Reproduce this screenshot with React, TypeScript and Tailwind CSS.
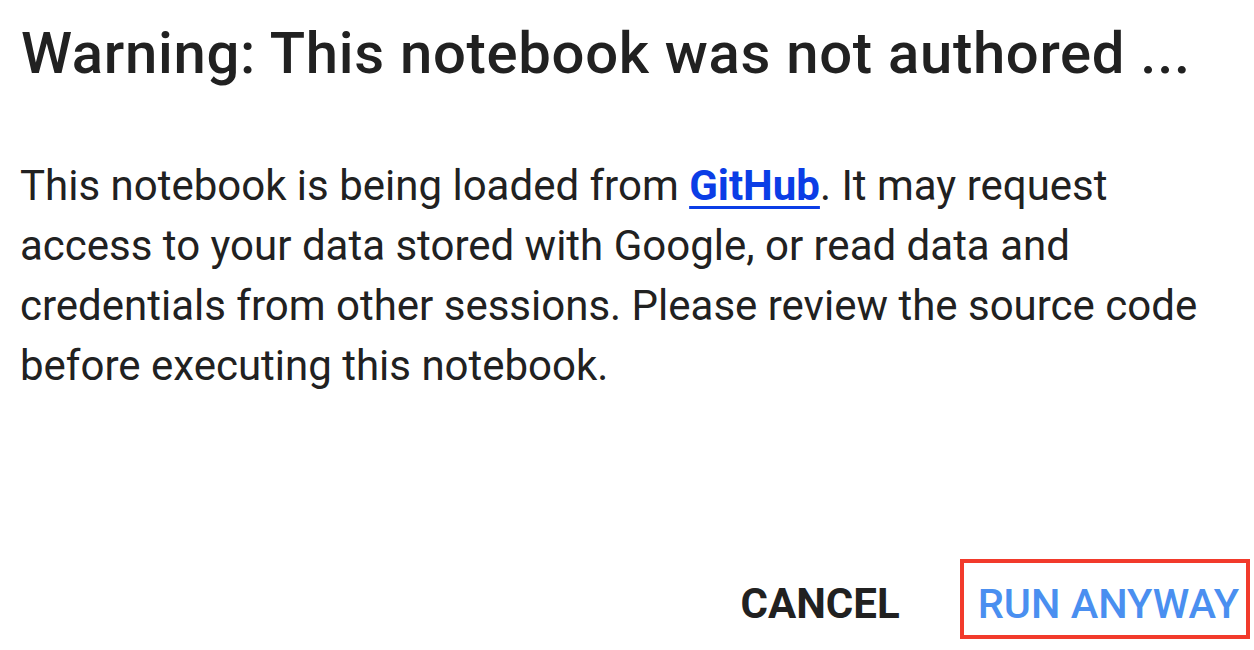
import React from "react";

export default function App() {
  return (
    <div
      className="w-[1254px] h-[650px] bg-white text-[#212121] overflow-hidden flex flex-col"
      style={{ fontFamily: "Roboto, 'Liberation Sans', sans-serif" }}
    >
      <h1 className="mt-[24px] pl-[21px] text-[58px] leading-[58px] font-medium tracking-[0.7px] whitespace-nowrap">
        Warning: This notebook was not authored ...
      </h1>
      <p className="mt-[74px] pl-[20px] pr-[40px] text-[42px] leading-[60px] font-normal">
        This notebook is being loaded from{" "}
        <a className="text-[#0b3de6] font-bold underline decoration-[3px] underline-offset-[6px]" href="#">
          GitHub
        </a>
        . It may request access to your data stored with Google, or read data and credentials from other sessions. Please review the source code before executing this notebook.
      </p>
      <div className="mt-auto mb-[11px] flex justify-end items-center pr-[4px]">
        <button className="pt-[10px] text-[42px] leading-[48px] font-bold text-[#212121]">CANCEL</button>
        <div className="ml-[60px] h-[80px] border-[4px] border-[#f23a2b] flex items-center pl-[14px] pr-[7px]">
          <button className="pt-[10px] text-[41.5px] leading-[48px] font-medium text-[#4a8ff0]">RUN ANYWAY</button>
        </div>
      </div>
    </div>
  );
}
